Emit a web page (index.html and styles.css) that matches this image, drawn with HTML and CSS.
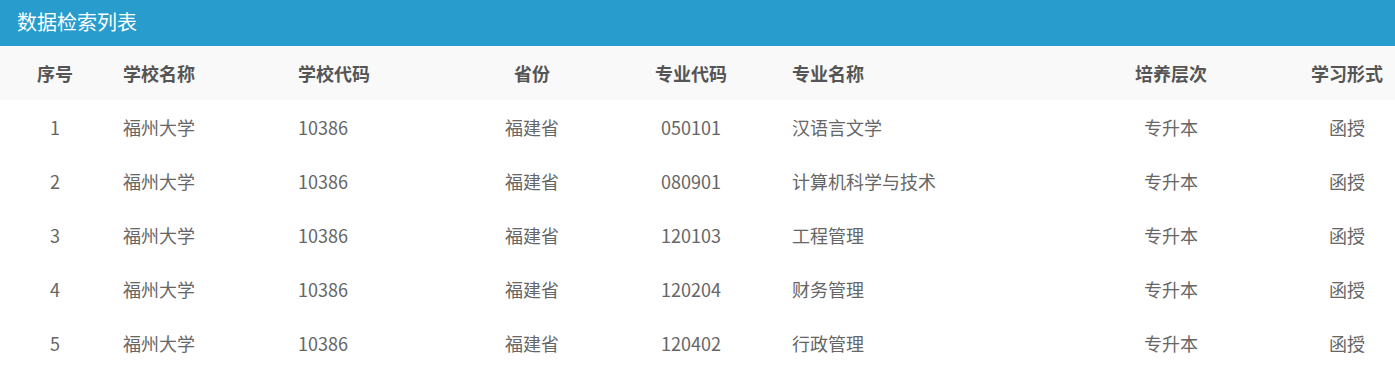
FILE: index.html
```html
<!DOCTYPE html>
<html lang="zh">
<head>
<meta charset="utf-8">
<title>数据检索列表</title>
<link rel="stylesheet" href="styles.css">
</head>
<body>
<div class="panel">
  <div class="panel-title">数据检索列表</div>
  <table class="list">
    <colgroup>
      <col class="c1"><col class="c2"><col class="c3"><col class="c4"><col class="c5"><col class="c6"><col class="c7"><col class="c8">
    </colgroup>
    <thead>
      <tr>
        <th class="ctr">序号</th>
        <th class="lft">学校名称</th>
        <th class="lft">学校代码</th>
        <th class="ctr">省份</th>
        <th class="ctr">专业代码</th>
        <th class="lft wide">专业名称</th>
        <th class="ctr">培养层次</th>
        <th class="ctr">学习形式</th>
      </tr>
    </thead>
    <tbody>
      <tr><td class="ctr">1</td><td class="lft">福州大学</td><td class="lft">10386</td><td class="ctr">福建省</td><td class="ctr">050101</td><td class="lft wide">汉语言文学</td><td class="ctr">专升本</td><td class="ctr">函授</td></tr>
      <tr><td class="ctr">2</td><td class="lft">福州大学</td><td class="lft">10386</td><td class="ctr">福建省</td><td class="ctr">080901</td><td class="lft wide">计算机科学与技术</td><td class="ctr">专升本</td><td class="ctr">函授</td></tr>
      <tr><td class="ctr">3</td><td class="lft">福州大学</td><td class="lft">10386</td><td class="ctr">福建省</td><td class="ctr">120103</td><td class="lft wide">工程管理</td><td class="ctr">专升本</td><td class="ctr">函授</td></tr>
      <tr><td class="ctr">4</td><td class="lft">福州大学</td><td class="lft">10386</td><td class="ctr">福建省</td><td class="ctr">120204</td><td class="lft wide">财务管理</td><td class="ctr">专升本</td><td class="ctr">函授</td></tr>
      <tr><td class="ctr">5</td><td class="lft">福州大学</td><td class="lft">10386</td><td class="ctr">福建省</td><td class="ctr">120402</td><td class="lft wide">行政管理</td><td class="ctr">专升本</td><td class="ctr">函授</td></tr>
    </tbody>
  </table>
</div>
</body>
</html>
```
FILE: styles.css
```css
html, body {
  margin: 0;
  padding: 0;
  background: #fff;
}
body {
  font-family: "Noto Sans CJK SC", "Noto Sans", sans-serif;
}
.panel {
  width: 1395px;
}
.panel-title {
  height: 46px;
  line-height: 44px;
  background: #279ccd;
  color: #fff;
  font-size: 20px;
  padding-left: 17px;
  box-sizing: border-box;
}
.list {
  width: 1395px;
  border-collapse: collapse;
  table-layout: fixed;
}
.c1 { width: 110px; }
.c2 { width: 175px; }
.c3 { width: 171px; }
.c4 { width: 152px; }
.c5 { width: 166px; }
.c6 { width: 269px; }
.c7 { width: 256px; }
.c8 { width: 96px; }
.list th, .list td {
  height: 54px;
  padding: 0;
  font-size: 18px;
  white-space: nowrap;
  vertical-align: middle;
}
.list thead tr {
  background: #f9f9f9;
}
.list th {
  color: #555;
  font-weight: bold;
}
.list td {
  color: #666;
}
.ctr { text-align: center; }
.lft { text-align: left; padding-left: 13px !important; }
.lft.wide { padding-left: 18px !important; }
```
